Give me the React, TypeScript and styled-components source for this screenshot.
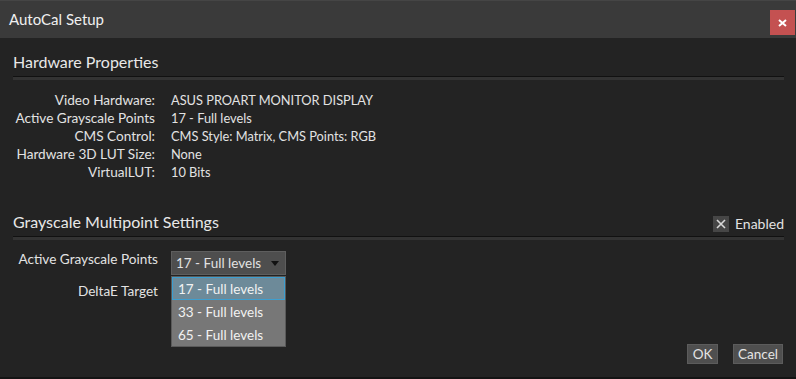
import { createGlobalStyle, styled } from "styled-components";

const GlobalStyle = createGlobalStyle`
  html, body {
    margin: 0;
    padding: 0;
    background: #232323;
  }
  body {
    font-family: "Lato", "Noto Sans", sans-serif;
    color: #e2e2e2;
  }
`;

const hardware = [
  { label: "Video Hardware:", value: "ASUS PROART MONITOR DISPLAY" },
  { label: "Active Grayscale Points", value: "17 - Full levels" },
  { label: "CMS Control:", value: "CMS Style: Matrix, CMS Points: RGB" },
  { label: "Hardware 3D LUT Size:", value: "None" },
  { label: "VirtualLUT:", value: "10 Bits" },
];

const levels = ["17 - Full levels", "33 - Full levels", "65 - Full levels"];

export default function App() {
  return (
    <Window>
      <GlobalStyle />
      <TitleBar>
        <Title>AutoCal Setup</Title>
        <CloseButton aria-label="close">
          <svg width="9" height="8" viewBox="0 0 9 8">
            <path d="M1 1 L8 7 M8 1 L1 7" stroke="#fff" strokeWidth="2" />
          </svg>
        </CloseButton>
      </TitleBar>
      <Body>
        <SectionHeader>
          <Heading>Hardware Properties</Heading>
        </SectionHeader>
        <Rule />
        <PropGrid>
          {hardware.map((row) => (
            <PropRow key={row.label}>
              <PropLabel>{row.label}</PropLabel>
              <PropValue>{row.value}</PropValue>
            </PropRow>
          ))}
        </PropGrid>

        <SectionHeader $spaced>
          <Heading>Grayscale Multipoint Settings</Heading>
          <CheckLabel>
            <CheckBox>
              <svg width="10" height="10" viewBox="0 0 10 10">
                <path d="M1 1 L9 9 M9 1 L1 9" stroke="#d8d8d8" strokeWidth="1.6" />
              </svg>
            </CheckBox>
            Enabled
          </CheckLabel>
        </SectionHeader>
        <Rule />
        <FormGrid>
          <FormLabel>Active Grayscale Points</FormLabel>
          <SelectWrap>
            <Select>
              <span>17 - Full levels</span>
              <Arrow />
            </Select>
            <Menu>
              {levels.map((l, i) => (
                <MenuItem key={l} $active={i === 0}>
                  {l}
                </MenuItem>
              ))}
            </Menu>
          </SelectWrap>
          <FormLabel>DeltaE Target</FormLabel>
          <Placeholder />
        </FormGrid>
        <Footer>
          <Button>OK</Button>
          <Button>Cancel</Button>
        </Footer>
      </Body>
    </Window>
  );
}

const Window = styled.div`
  width: 796px;
  height: 379px;
  display: flex;
  flex-direction: column;
  background: #232323;
  box-sizing: border-box;
  border-bottom: 2px solid #141414;
`;

const TitleBar = styled.div`
  height: 38px;
  box-sizing: border-box;
  border-top: 1px solid #454545;
  background: #3a3a3a;
  display: flex;
  align-items: center;
  justify-content: space-between;
  padding: 0 1px 0 9px;
`;

const Title = styled.div`
  font-size: 15px;
  color: #f0f0f0;
  margin-top: -1px;
`;

const CloseButton = styled.button`
  width: 25px;
  height: 25px;
  border: none;
  padding: 0;
  margin-top: 6px;
  background: #c45151;
  display: flex;
  align-items: center;
  justify-content: center;
`;

const Body = styled.div`
  flex: 1;
  display: flex;
  flex-direction: column;
  padding: 0 12px 0 13px;
`;

const SectionHeader = styled.div<{ $spaced?: boolean }>`
  display: flex;
  justify-content: space-between;
  align-items: flex-end;
  margin-top: ${(p) => (p.$spaced ? "29px" : "12px")};
  height: 26px;
`;

const Heading = styled.div`
  font-size: 16px;
  line-height: 24px;
  padding-bottom: 2px;
  color: #e8e8e8;
`;

const Rule = styled.div`
  height: 1px;
  background: #111;
  border-bottom: 3px solid #333;
`;

const PropGrid = styled.div`
  display: flex;
  flex-direction: column;
  margin-top: 11px;
`;

const PropRow = styled.div`
  display: grid;
  grid-template-columns: 142px 1fr;
  column-gap: 16px;
  height: 18px;
  align-items: center;
`;

const PropLabel = styled.div`
  font-size: 13.6px;
  text-align: right;
  white-space: nowrap;
`;

const PropValue = styled.div`
  font-size: 12.8px;
  white-space: nowrap;
`;

const CheckLabel = styled.label`
  display: flex;
  align-items: center;
  gap: 6px;
  font-size: 14px;
  padding-bottom: 4px;
`;

const CheckBox = styled.span`
  width: 16px;
  height: 16px;
  background: #464646;
  display: flex;
  align-items: center;
  justify-content: center;
`;

const FormGrid = styled.div`
  display: grid;
  grid-template-columns: 145px 115px;
  column-gap: 13px;
  row-gap: 8px;
  margin-top: 11px;
  align-items: center;
`;

const FormLabel = styled.div`
  font-size: 13.6px;
  text-align: right;
  white-space: nowrap;
  align-self: start;
`;

const SelectWrap = styled.div`
  position: relative;
`;

const Select = styled.div`
  height: 24px;
  box-sizing: border-box;
  border: 1px solid #5e5e5e;
  background: #4e4e4e;
  display: flex;
  align-items: center;
  justify-content: space-between;
  padding: 0 6px 0 4px;
  font-size: 13.5px;
`;

const Arrow = styled.span`
  width: 0;
  height: 0;
  border-left: 4px solid transparent;
  border-right: 4px solid transparent;
  border-top: 5px solid #111;
`;

const Menu = styled.div`
  position: absolute;
  top: 25px;
  left: 0;
  width: 115px;
  box-sizing: border-box;
  border: 1px solid #5a5a5a;
  background: #777;
  display: flex;
  flex-direction: column;
  z-index: 2;
`;

const MenuItem = styled.div<{ $active?: boolean }>`
  height: 23px;
  box-sizing: border-box;
  display: flex;
  align-items: center;
  padding-left: 5px;
  font-size: 13.5px;
  color: #f2f2f2;
  background: ${(p) => (p.$active ? "#6d8a99" : "transparent")};
  border: 1px solid ${(p) => (p.$active ? "#3d9fd0" : "transparent")};
`;

const Placeholder = styled.div`
  height: 24px;
`;

const Footer = styled.div`
  margin-top: auto;
  margin-bottom: 13px;
  display: flex;
  justify-content: flex-end;
  gap: 15px;
  padding-right: 1px;
`;

const Button = styled.button`
  height: 20px;
  padding: 0 4px;
  min-width: 31px;
  border: 1px solid #5c5c5c;
  background: #4f4f4f;
  color: #e4e4e4;
  font-family: inherit;
  font-size: 13.5px;
  line-height: 18px;
`;
